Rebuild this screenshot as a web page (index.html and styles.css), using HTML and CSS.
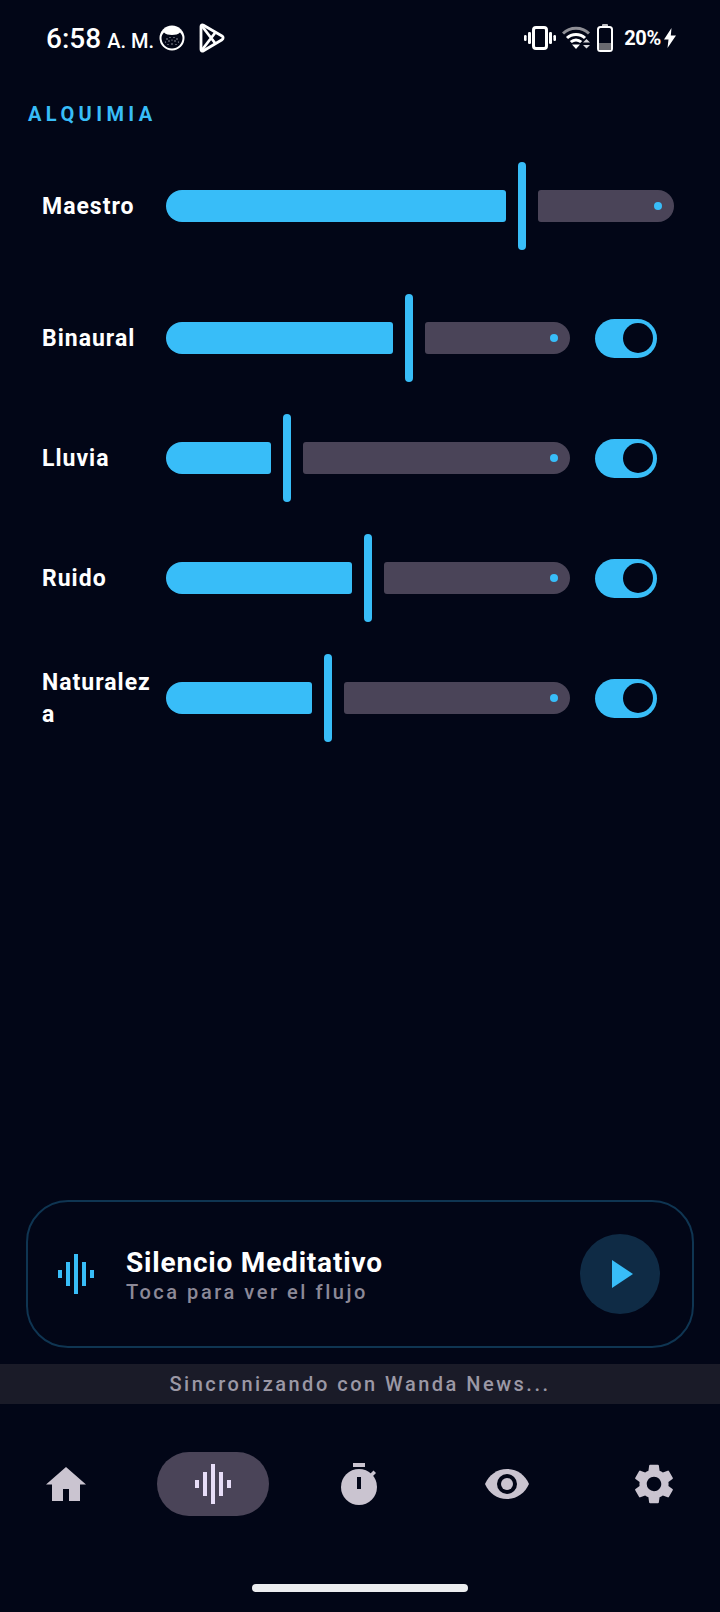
FILE: index.html
```html
<!DOCTYPE html>
<html lang="es">
<head>
  <meta charset="UTF-8">
  <title>Alquimia</title>
  <meta name="viewport" content="width=device-width, initial-scale=1.0">
  <link rel="stylesheet" href="styles.css">
</head>
<body>

  <div class="status-bar">
    <div class="status-left">
      <span class="hora">6:58</span>
      <span class="ampm">A. M.</span>
      <svg class="ico-gato" width="26" height="26" viewBox="0 0 26 26">
        <circle cx="13" cy="13" r="12.500" fill="#fff"/>
        <path d="M2.500 13c0-2 1-4 2.500-5.500C7 9.300 9.500 10 13 10s6-.7 8-2.500c1.500 1.500 2.500 3.500 2.500 5.500 0 5.800-4.700 10.500-10.500 10.500S2.500 18.800 2.500 13z" fill="#020617"/>
        <g fill="#b9bcc6">
          <circle cx="8" cy="14" r=".7"/>
          <circle cx="11" cy="12.500" r=".6"/>
          <circle cx="15" cy="12.500" r=".6"/>
          <circle cx="18" cy="14" r=".7"/>
          <circle cx="6.500" cy="17" r=".6"/>
          <circle cx="10" cy="16" r=".7"/>
          <circle cx="13" cy="15" r=".6"/>
          <circle cx="16" cy="16" r=".7"/>
          <circle cx="19.500" cy="17" r=".6"/>
          <circle cx="9" cy="19.500" r=".6"/>
          <circle cx="13" cy="19" r=".7"/>
          <circle cx="17" cy="19.500" r=".6"/>
        </g>
      </svg>
      <svg class="ico-play-store" width="26" height="30" viewBox="0 0 26 30" fill="none" stroke="#fff" stroke-width="2.800" stroke-linejoin="round">
        <path d="M2 3.500c0-1.500 1.300-2 2.500-1.300L23 13c1.500.9 1.500 2.800 0 3.700L4.500 27.800C3.300 28.500 2 28 2 26.500z"/>
        <path d="M2.500 2.500L16 20M2.500 27.500L16 10"/>
      </svg>
    </div>
    <div class="status-right">
      <svg width="32" height="24" viewBox="0 0 32 24" fill="#fff">
        <rect x="9.500" y="1.500" width="13" height="21" rx="2.500" fill="none" stroke="#fff" stroke-width="3"/>
        <rect x="0" y="9" width="2.600" height="6" rx="1.200"/>
        <rect x="4" y="6" width="3" height="12" rx="1.200"/>
        <rect x="25" y="6" width="3" height="12" rx="1.200"/>
        <rect x="29.400" y="9" width="2.600" height="6" rx="1.200"/>
      </svg>
      <svg class="ico-wifi" width="28" height="24" viewBox="0 0 28 24" fill="none">
        <path d="M1 7.500C8 .5 20 .5 27 7.500" stroke="#8f8f96" stroke-width="3"/>
        <path d="M5 12c4.800-4.800 13.200-4.800 18 0" stroke="#fff" stroke-width="3"/>
        <path d="M8.800 16c3-2.800 7.400-2.800 10.400 0" stroke="#fff" stroke-width="3"/>
        <path d="M10 18.500h8L14 23z" fill="#fff"/>
        <path d="M21 16.500l3.500-3.500 3.500 3.500zM21 19l3.500 3.500L28 19z" fill="#d8d8dc"/>
      </svg>
      <svg class="ico-bateria" width="16" height="28" viewBox="0 0 16 28">
        <rect x="5" y="0" width="6" height="3" rx="1" fill="#bdbdc2"/>
        <rect x="1" y="3" width="14" height="24" rx="2.500" fill="none" stroke="#fff" stroke-width="2"/>
        <rect x="2" y="19" width="12" height="7" fill="#6a6a70"/>
      </svg>
      <span class="bateria-txt">20%</span>
      <svg class="ico-rayo" width="12" height="20" viewBox="0 0 12 20" fill="#fff">
        <path d="M7.500 0L0 11.500h4.500L3.500 20 12 7.500H6.800z"/>
      </svg>
    </div>
  </div>

  <h2 class="titulo">ALQUIMIA</h2>

  <div class="mezcla">
    <div class="fila fila-maestro">
      <span class="etiqueta">Maestro</span>
      <div class="slider">
        <div class="activo" style="width: 340px"></div>
        <div class="pulgar"></div>
        <div class="resto"><span class="punto"></span></div>
      </div>
    </div>

    <div class="fila">
      <span class="etiqueta">Binaural</span>
      <div class="slider">
        <div class="activo" style="width: 227px"></div>
        <div class="pulgar"></div>
        <div class="resto"><span class="punto"></span></div>
      </div>
      <div class="toggle"><span class="perilla"></span></div>
    </div>

    <div class="fila">
      <span class="etiqueta">Lluvia</span>
      <div class="slider">
        <div class="activo" style="width: 105px"></div>
        <div class="pulgar"></div>
        <div class="resto"><span class="punto"></span></div>
      </div>
      <div class="toggle"><span class="perilla"></span></div>
    </div>

    <div class="fila">
      <span class="etiqueta">Ruido</span>
      <div class="slider">
        <div class="activo" style="width: 186px"></div>
        <div class="pulgar"></div>
        <div class="resto"><span class="punto"></span></div>
      </div>
      <div class="toggle"><span class="perilla"></span></div>
    </div>

    <div class="fila">
      <span class="etiqueta">Naturaleza</span>
      <div class="slider">
        <div class="activo" style="width: 146px"></div>
        <div class="pulgar"></div>
        <div class="resto"><span class="punto"></span></div>
      </div>
      <div class="toggle"><span class="perilla"></span></div>
    </div>
  </div>

  <div class="reproductor">
    <div class="onda onda-azul">
      <i class="b1"></i><i class="b2"></i><i class="b3"></i><i class="b2"></i><i class="b1"></i>
    </div>
    <div class="reproductor-txt">
      <div class="rep-titulo">Silencio Meditativo</div>
      <div class="rep-sub">Toca para ver el flujo</div>
    </div>
    <button class="btn-play">
      <svg width="21" height="28" viewBox="0 0 21 28"><path d="M0 0L21 14L0 28z" fill="#38bdf8"/></svg>
    </button>
  </div>

  <div class="sincro">Sincronizando con Wanda News...</div>

  <nav class="nav">
    <div class="nav-item">
      <svg width="40" height="34" viewBox="0 0 40 34"><path d="M20 0L40 17.500H34V34H23V22H17V34H6V17.500H0z" fill="#cac4d0"/></svg>
    </div>
    <div class="nav-item nav-activo">
      <div class="onda onda-clara">
        <i class="b1"></i><i class="b2"></i><i class="b3"></i><i class="b2"></i><i class="b1"></i>
      </div>
    </div>
    <div class="nav-item">
      <svg width="38" height="42" viewBox="0 0 38 42" fill="#cac4d0">
        <rect x="12" y="0" width="12" height="4"/>
        <path d="M29 11l3.500-3.500 2.500 2.500-3.500 3.500z"/>
        <circle cx="18" cy="24" r="18"/>
        <rect x="16" y="14" width="4" height="12" fill="#020617"/>
      </svg>
    </div>
    <div class="nav-item">
      <svg width="44" height="30" viewBox="0 0 44 30">
        <path d="M22 0C12 0 4 6 0 15c4 9 12 15 22 15s18-6 22-15C40 6 32 0 22 0z" fill="#cac4d0"/>
        <circle cx="22" cy="15" r="10" fill="#020617"/>
        <circle cx="22" cy="15" r="6" fill="#cac4d0"/>
      </svg>
    </div>
    <div class="nav-item">
      <svg width="38" height="40" viewBox="2.600 2 18.800 20" preserveAspectRatio="none">
        <path fill="#cac4d0" d="M19.140 12.940c.04-.3.060-.61.060-.94 0-.32-.02-.64-.07-.94l2.030-1.580a.49.49 0 0 0 .12-.61l-1.920-3.320a.488.488 0 0 0-.59-.22l-2.390.96c-.5-.38-1.030-.7-1.620-.94l-.36-2.540a.484.484 0 0 0-.48-.41h-3.840c-.24 0-.43.17-.47.41l-.36 2.540c-.59.24-1.130.57-1.620.94l-2.390-.96c-.22-.08-.47 0-.59.22L2.740 8.870c-.12.21-.08.47.12.61l2.030 1.580c-.05.3-.09.63-.09.94s.02.64.07.94l-2.030 1.580a.49.49 0 0 0-.12.61l1.920 3.320c.12.22.37.29.59.22l2.390-.96c.5.38 1.030.7 1.620.94l.36 2.540c.05.24.24.41.48.41h3.840c.24 0 .44-.17.47-.41l.36-2.540c.59-.24 1.130-.56 1.620-.94l2.390.96c.22.08.47 0 .59-.22l1.920-3.320c.12-.22.070-.47-.12-.61l-2.010-1.580zM12 15.600A3.610 3.610 0 0 1 8.400 12c0-1.980 1.620-3.600 3.600-3.600s3.600 1.620 3.600 3.600-1.620 3.600-3.600 3.600z"/>
      </svg>
    </div>
  </nav>

  <div class="home-barra"></div>

</body>
</html>
```

FILE: styles.css
```css
* {
  box-sizing: border-box;
}

body {
  background-color: #020617;
  font-family: "Roboto", sans-serif;
  color: white;
  margin: 0;
  width: 720px;
  height: 1612px;
  overflow: hidden;
}

.status-bar {
  height: 76px;
  display: flex;
  justify-content: space-between;
  align-items: center;
  padding: 0 44px 0 46px;
}

.status-left,
.status-right {
  display: flex;
  align-items: center;
}

.hora {
  font-size: 28px;
  font-weight: 500;
}

.ampm {
  font-size: 20px;
  font-weight: 500;
  margin: 5px 0 0 6px;
}

.ico-gato {
  margin-left: 5px;
}

.ico-play-store {
  margin-left: 14px;
}

.status-right {
  gap: 7px;
}

.ico-wifi {
  margin-left: -1px;
}

.bateria-txt {
  font-size: 20px;
  font-weight: 700;
  letter-spacing: -0.3px;
  margin-left: 4px;
}

.ico-rayo {
  margin-left: -4px;
}

.titulo {
  margin: 26px 0 0 28px;
  font-size: 20px;
  line-height: 24px;
  font-weight: 700;
  letter-spacing: 4.4px;
  color: #38bdf8;
}

.mezcla {
  margin-top: 36px;
  padding-left: 42px;
  display: flex;
  flex-direction: column;
  gap: 32px;
}

.fila {
  display: flex;
  align-items: center;
  height: 88px;
}

.fila-maestro {
  margin-bottom: 12px;
}

.etiqueta {
  width: 112px;
  margin-right: 12px;
  padding-top: 2px;
  font-size: 23px;
  font-weight: 700;
  line-height: 32px;
  letter-spacing: 1px;
  overflow-wrap: anywhere;
}

.slider {
  display: flex;
  align-items: center;
  gap: 12px;
  width: 404px;
}

.fila-maestro .slider {
  width: 508px;
}

.activo {
  height: 32px;
  background-color: #38bdf8;
  border-radius: 16px 3px 3px 16px;
  flex-shrink: 0;
}

.pulgar {
  width: 8px;
  height: 88px;
  background-color: #38bdf8;
  border-radius: 4px;
  flex-shrink: 0;
}

.resto {
  flex: 1;
  height: 32px;
  background-color: #4a4458;
  border-radius: 3px 16px 16px 3px;
  display: flex;
  align-items: center;
  justify-content: flex-end;
  padding-right: 12px;
}

.punto {
  width: 8px;
  height: 8px;
  border-radius: 50%;
  background-color: #38bdf8;
}

.toggle {
  width: 62px;
  height: 39px;
  margin-left: 25px;
  background-color: #38bdf8;
  border-radius: 20px;
  display: flex;
  align-items: center;
  justify-content: flex-end;
  padding-right: 4px;
}

.perilla {
  width: 30px;
  height: 30px;
  border-radius: 50%;
  background-color: #020617;
}

.reproductor {
  position: absolute;
  top: 1200px;
  left: 26px;
  width: 668px;
  height: 148px;
  border: 2px solid #0f3552;
  border-radius: 42px;
  display: flex;
  align-items: center;
  padding: 0 32px 0 30px;
}

.onda {
  display: flex;
  align-items: center;
  gap: 4px;
}

.onda i {
  display: block;
  width: 4px;
}

.onda .b1 { height: 8px; }
.onda .b2 { height: 24px; }
.onda .b3 { height: 40px; }

.onda-azul i {
  background-color: #38bdf8;
}

.onda-clara i {
  background-color: #e8def8;
}

.reproductor-txt {
  flex: 1;
  margin-left: 32px;
  margin-top: 3px;
}

.rep-titulo {
  font-size: 28px;
  font-weight: 700;
  line-height: 32px;
  letter-spacing: 0.8px;
}

.rep-sub {
  font-size: 20px;
  font-weight: 500;
  line-height: 26px;
  letter-spacing: 2.55px;
  color: #8c8997;
}

.btn-play {
  width: 80px;
  height: 80px;
  border: none;
  border-radius: 50%;
  background-color: #0f2b45;
  padding: 0 0 0 5px;
  display: flex;
  align-items: center;
  justify-content: center;
}

.sincro {
  position: absolute;
  top: 1364px;
  left: 0;
  width: 720px;
  height: 40px;
  background-color: #1a1b28;
  color: #9b98a5;
  font-size: 20px;
  font-weight: 500;
  line-height: 40px;
  letter-spacing: 2.5px;
  text-align: center;
}

.nav {
  position: absolute;
  top: 1452px;
  left: 10px;
  width: 700px;
  display: flex;
  justify-content: space-between;
}

.nav-item {
  width: 112px;
  height: 64px;
  display: flex;
  align-items: center;
  justify-content: center;
  border-radius: 32px;
}

.nav-activo {
  background-color: #4a4458;
}

.home-barra {
  position: absolute;
  top: 1584px;
  left: 252px;
  width: 216px;
  height: 8px;
  border-radius: 4px;
  background-color: #ecedf0;
}
```
